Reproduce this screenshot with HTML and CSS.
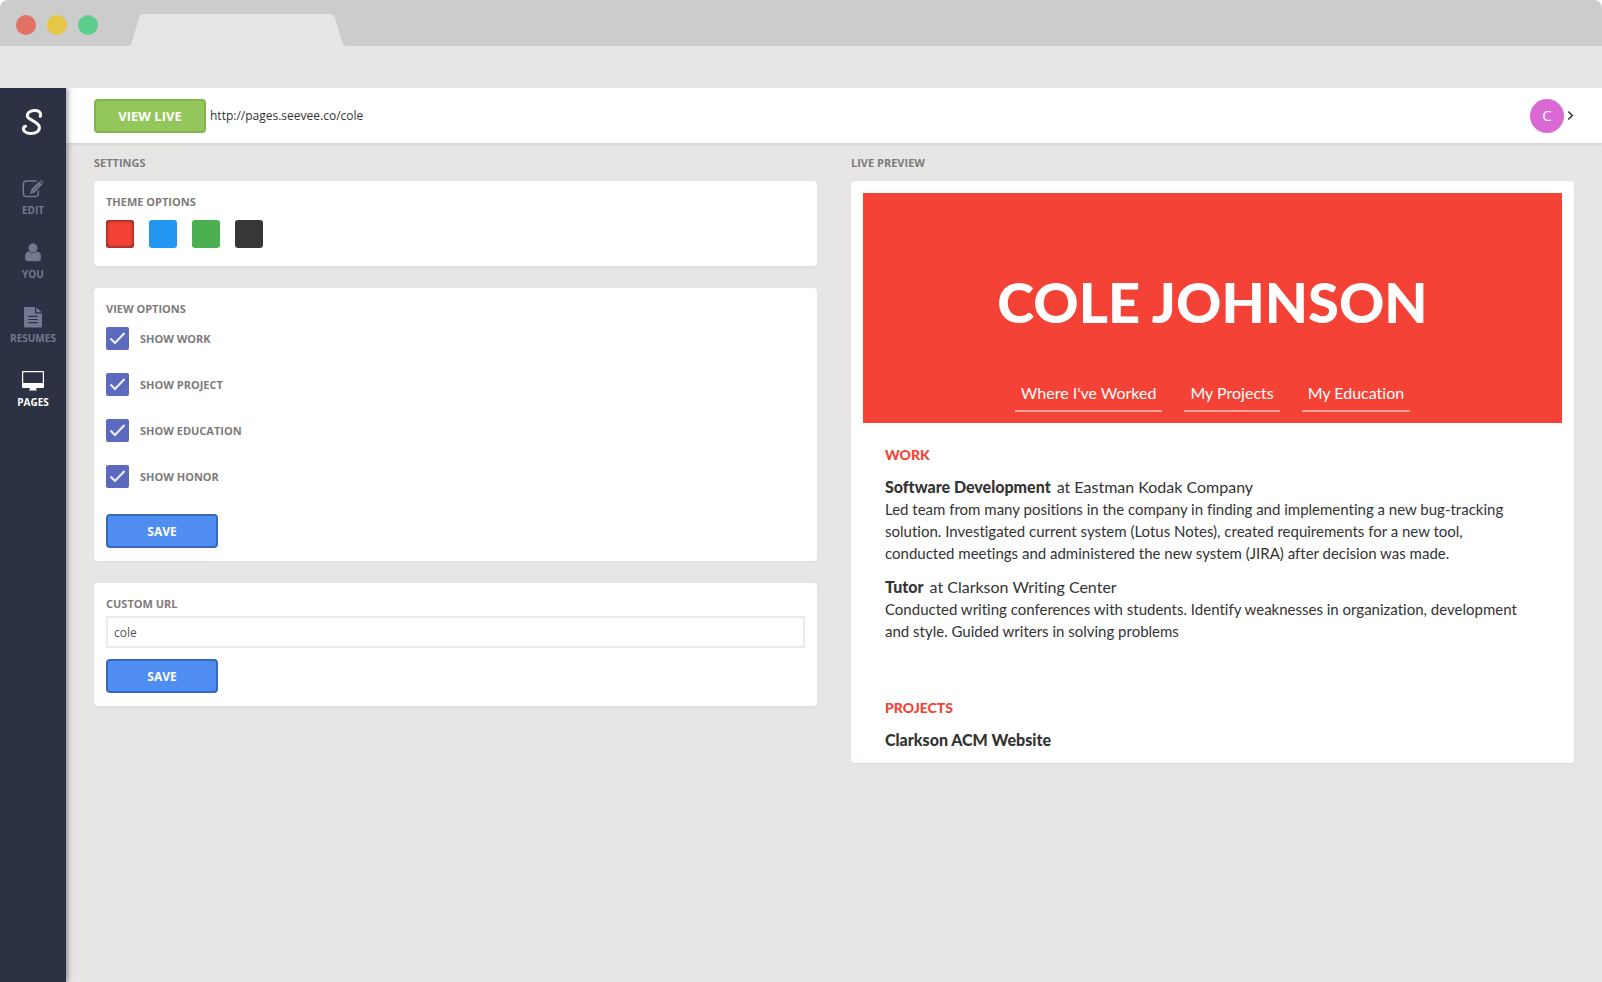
FILE: index.html
```html
<!DOCTYPE html>
<html lang="en">
<head>
<meta charset="utf-8">
<title>SeeVee Pages</title>
<link rel="stylesheet" href="styles.css">
</head>
<body>
<div class="window">
  <div class="titlebar">
    <div class="lights">
      <span class="light light-close"></span>
      <span class="light light-min"></span>
      <span class="light light-max"></span>
    </div>
    <svg class="tab" width="220" height="32" viewBox="0 0 220 32" aria-hidden="true"><path d="M0 32C3 31.500 3.500 30 4 28L11 4Q12 0 16 0H202Q206 0 207 4L214 28C214.500 30 216 31.800 219 32Z" fill="#e6e6e6"/></svg>
  </div>
  <div class="toolbar"></div>
  <div class="app">
    <nav class="sidebar">
      <a class="logo" href="#" aria-label="SeeVee">
        <svg width="22" height="28" viewBox="0 0 22 28" fill="none" stroke="#fafaf5" stroke-linecap="round"><path d="M18.300 8.300C19.600 3.800 16.200 2.400 12 2.600C7.500 2.900 4.800 5.300 5.400 8.300C6.300 12.200 17.200 13.600 17.400 19.200C17.600 23.600 13.500 25.400 9 25.400C3.800 25.400 .9 23 1.600 20Q2 18.300 3.600 18.300" stroke-width="3"/></svg>
      </a>
      <a class="nav-item" href="#">
        <svg width="22" height="22" viewBox="0 0 22 22" fill="none" stroke="currentColor"><path d="M14.500 3H5Q1.300 3 1.300 6.500V15Q1.300 18.600 5 18.600H13Q16.400 18.600 16.400 15V12.500" stroke-width="1.500"/><path d="M8.200 15.900L9 11.400L17 3.400L20.200 6.600L12.300 14.800Z" fill="currentColor" stroke="none"/><path d="M18 2.400Q18.800 1.600 19.700 2.500L21 3.900Q21.800 4.800 20.900 5.700Z" fill="currentColor" stroke="none"/><path d="M11.300 12.300L16.900 6.700M9.700 13.300L10.700 14.300" stroke="#2c3144" stroke-width=".8"/></svg>
        <span>EDIT</span>
      </a>
      <a class="nav-item" href="#">
        <svg width="22" height="22" viewBox="0 0 22 22" fill="currentColor"><path d="M7 9.500C4 9.500 3 12 3 15.500Q3 19.300 6.300 19.300H15.700Q19 19.300 19 15.500C19 12 18 9.500 15 9.500Q11 12.500 7 9.500Z"/><circle cx="11" cy="6" r="4.500"/></svg>
        <span>YOU</span>
      </a>
      <a class="nav-item" href="#">
        <svg width="22" height="22" viewBox="0 0 22 22" fill="currentColor"><path d="M3 1H13V7.500H20V20.500Q20 21.500 19 21.500H3Q2 21.500 2 20.500V2Q2 1 3 1ZM14.300 1.200L19.700 6.300H14.300Z"/><path d="M6.300 10.400H15.700M6.300 13.500H15.700M6.300 16.600H15.700" stroke="#2c3144" stroke-width="1.200"/></svg>
        <span>RESUMES</span>
      </a>
      <a class="nav-item active" href="#" aria-current="page">
        <svg width="22" height="22" viewBox="0 0 22 22" fill="currentColor"><path fill-rule="evenodd" d="M1 1H21Q22 1 22 2V17Q22 18 21 18H14.300V19.500L15 20.500H7L7.700 19.500V18H1Q0 18 0 17V2Q0 1 1 1ZM1.200 2.200V13H20.800V2.200Z"/></svg>
        <span>PAGES</span>
      </a>
    </nav>
    <div class="main">
      <header class="header">
        <button class="btn btn-green" type="button">VIEW LIVE</button>
        <a class="live-url" href="#">http://pages.seevee.co/cole</a>
        <button class="account" type="button" aria-label="Account">
          <span class="avatar">C</span>
          <svg width="7" height="11" viewBox="0 0 7 11" fill="none" stroke="#333" stroke-width="1.500"><path d="M1.300 1.500L5.300 5.500L1.300 9.500"/></svg>
        </button>
      </header>
      <main class="columns">
        <section class="column">
          <h2 class="label column-title">SETTINGS</h2>
          <form class="card card-theme">
            <h3 class="label">THEME OPTIONS</h3>
            <div class="swatches">
              <input class="swatch red" type="radio" name="theme" aria-label="Red" checked>
              <input class="swatch blue" type="radio" name="theme" aria-label="Blue">
              <input class="swatch green" type="radio" name="theme" aria-label="Green">
              <input class="swatch dark" type="radio" name="theme" aria-label="Dark">
            </div>
          </form>
          <form class="card">
            <h3 class="label">VIEW OPTIONS</h3>
            <div class="checks">
              <label class="label check"><input type="checkbox" checked>SHOW WORK</label>
              <label class="label check"><input type="checkbox" checked>SHOW PROJECT</label>
              <label class="label check"><input type="checkbox" checked>SHOW EDUCATION</label>
              <label class="label check"><input type="checkbox" checked>SHOW HONOR</label>
            </div>
            <button class="btn btn-blue" type="button">SAVE</button>
          </form>
          <form class="card">
            <label class="label" for="url">CUSTOM URL</label>
            <input class="text-input" id="url" type="text" value="cole">
            <button class="btn btn-blue" type="button">SAVE</button>
          </form>
        </section>
        <section class="column">
          <h2 class="label column-title">LIVE PREVIEW</h2>
          <article class="card preview">
            <div class="hero">
              <h1>COLE JOHNSON</h1>
              <nav class="hero-nav">
                <a href="#work">Where I've Worked</a>
                <a href="#projects">My Projects</a>
                <a href="#education">My Education</a>
              </nav>
            </div>
            <div class="resume">
              <section id="work">
                <h2>WORK</h2>
                <div class="entry">
                  <div><strong>Software Development</strong>at Eastman Kodak Company</div>
                  <p>Led team from many positions in the company in finding and implementing a new bug-tracking solution. Investigated current system (Lotus Notes), created requirements for a new tool, conducted meetings and administered the new system (JIRA) after decision was made.</p>
                </div>
                <div class="entry">
                  <div><strong>Tutor</strong>at Clarkson Writing Center</div>
                  <p>Conducted writing conferences with students. Identify weaknesses in organization, development and style. Guided writers in solving problems</p>
                </div>
              </section>
              <section id="projects">
                <h2>PROJECTS</h2>
                <div class="entry"><strong>Clarkson ACM Website</strong></div>
              </section>
            </div>
          </article>
        </section>
      </main>
    </div>
  </div>
</div>
</body>
</html>
```

FILE: styles.css
```css
* { box-sizing: border-box; }

body {
  margin: 0;
  background: #fff;
  color: #333;
  font-family: "Open Sans", sans-serif;
}

h1, h2, h3, p { margin: 0; }
a { color: inherit; text-decoration: none; }
button, input { font-family: inherit; }

.window {
  display: flex;
  flex-direction: column;
  min-height: 100vh;
}

/* Browser frame */
.titlebar {
  display: flex;
  align-items: flex-end;
  height: 46px;
  padding-left: 16px;
  background: #ccc;
  border-radius: 8px 8px 0 0;
}
.lights { display: flex; gap: 11px; padding-bottom: 11px; }
.light { width: 20px; height: 20px; border-radius: 50%; }
.light-close { background: #e17065; }
.light-min { background: #e6c645; }
.light-max { background: #5bce8b; }
.tab { display: block; margin-left: 30px; }
.toolbar { height: 42px; background: #e6e6e6; }

.app { display: flex; flex: 1; overflow: hidden; }

/* Sidebar */
.sidebar {
  z-index: 1;
  display: flex;
  flex-direction: column;
  align-items: center;
  flex: none;
  width: 66px;
  padding: 20px 0;
  background: #2c3144;
  box-shadow: 1px 0 6px rgba(0, 0, 0, .5);
}
.logo { margin-bottom: 42px; }
.logo svg { display: block; }
.nav-item {
  display: flex;
  flex-direction: column;
  align-items: center;
  gap: 3px;
  height: 64px;
  color: #737991;
  font-size: 10px;
  font-weight: 700;
  line-height: 14px;
}
.nav-item.active { color: #fff; }

.main { flex: 1; min-width: 0; background: #e7e6e4; }

.header {
  display: flex;
  align-items: center;
  height: 55px;
  padding: 0 28px;
  background: #fff;
  box-shadow: 0 1px 3px rgba(0, 0, 0, .12);
}
.live-url { margin-left: 4px; font-size: 12px; }
.account {
  display: flex;
  align-items: center;
  gap: 3px;
  margin-left: auto;
  padding: 0;
  border: 0;
  background: none;
}
.avatar {
  width: 34px;
  height: 34px;
  border-radius: 50%;
  background: #da68d5;
  color: #fff;
  font-size: 15px;
  line-height: 32px;
}

.btn {
  display: block;
  width: 112px;
  height: 34px;
  padding: 0;
  border: 2px solid;
  border-radius: 4px;
  color: #fff;
  font-size: 12px;
  font-weight: 700;
}
.btn-green { background: #93c75c; border-color: #82b34d; font-size: 13px; }
.btn-blue { background: #4f8ef0; border-color: #3669bb; }

/* Content */
.columns {
  display: grid;
  grid-template-columns: 1fr 1fr;
  gap: 34px;
  padding: 12px 28px 28px;
}
.column { min-width: 0; }
.label {
  display: block;
  color: #7e7b7b;
  font-size: 11px;
  font-weight: 700;
  line-height: 16px;
}
.column-title { margin-bottom: 10px; }
.card {
  margin-bottom: 22px;
  padding: 13px 12px;
  background: #fff;
  border-radius: 4px;
  box-shadow: 0 1px 2px rgba(0, 0, 0, .06);
}
.card-theme { padding-bottom: 18px; }
.swatches { display: flex; gap: 15px; margin-top: 10px; }
.swatch {
  appearance: none;
  width: 28px;
  height: 28px;
  margin: 0;
  border-radius: 3px;
}
.swatch:checked { box-shadow: inset 0 0 4px rgba(0, 0, 0, .7); }
.red { background: #f44336; }
.blue { background: #2196f3; }
.green { background: #4caf50; }
.dark { background: #373737; }

.checks {
  display: flex;
  flex-direction: column;
  align-items: flex-start;
  gap: 23px;
  margin: 10px 0 26px;
}
.check { display: flex; align-items: center; gap: 11px; }
.check input {
  appearance: none;
  width: 23px;
  height: 23px;
  margin: 0;
  border-radius: 2px;
  background: #5b69bf url("data:image/svg+xml,%3Csvg xmlns='http://www.w3.org/2000/svg' viewBox='0 0 23 23'%3E%3Cpath d='M4.500 11.500L9 16L18.500 6' fill='none' stroke='%23eceefa' stroke-width='2.200'/%3E%3C/svg%3E");
}
.text-input {
  display: block;
  width: 100%;
  height: 32px;
  margin: 4px 0 11px;
  padding: 0 6px;
  border: 2px solid #ebebeb;
  background: #fff;
  color: #555;
  font-size: 12px;
}

/* Live preview */
.preview {
  padding: 12px;
  font-family: Lato, sans-serif;
  font-size: 16px;
  font-variant-ligatures: none;
  line-height: 22px;
}
.hero {
  padding: 73px 12px 11px;
  background: #f44336;
  color: #fff;
  text-align: center;
}
.hero h1 { font-size: 56px; font-weight: 900; line-height: 72px; }
.hero-nav {
  display: flex;
  justify-content: center;
  gap: 22px;
  margin-top: 44px;
}
.hero-nav a { padding: 0 6px 6px; border-bottom: 2px solid #f9a19b; }
.resume { padding: 21px 30px 0 22px; }
.resume section + section { margin-top: 55px; }
.resume h2 {
  margin-bottom: 10px;
  color: #f44336;
  font-size: 14px;
  font-weight: 900;
  line-height: 22px;
}
.resume p { font-size: 15px; }
.resume strong { margin-right: 6px; font-weight: 900; }
.entry + .entry { margin-top: 12px; }
```
